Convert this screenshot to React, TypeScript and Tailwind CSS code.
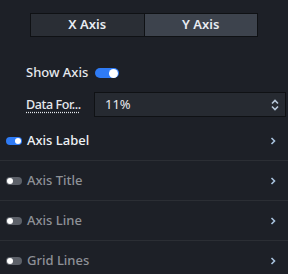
import { useState } from "react";

const Chevron = () => (
  <svg width="6" height="8" viewBox="0 0 6 8" className="shrink-0">
    <path d="M1.5 1 L4.5 4 L1.5 7" stroke="#a9c3de" strokeWidth="1.6" fill="none" />
  </svg>
);

const MiniSwitch = ({ on }: { on: boolean }) => (
  <div
    className={`w-[16px] h-[8px] rounded-full flex items-center px-[1px] ${
      on ? "bg-[#2f7bf5] justify-end" : "bg-[#5d6169] justify-start"
    }`}
  >
    <div className="w-[6px] h-[6px] rounded-full bg-white" />
  </div>
);

const sections = [
  { label: "Axis Label", on: true },
  { label: "Axis Title", on: false },
  { label: "Axis Line", on: false },
  { label: "Grid Lines", on: false },
];

export default function App() {
  const [tab, setTab] = useState("y");

  return (
    <div
      className="w-[288px] h-[274px] bg-[#1d2027] overflow-hidden text-[13px]"
      style={{ fontFamily: "'Noto Sans', 'Liberation Sans', sans-serif" }}
    >
      {/* tabs */}
      <div className="pt-[13px] px-[30px]">
        <div className="flex h-[24px] border border-[#0f1114] bg-[#0f1114] gap-[1px]">
          <button
            onClick={() => setTab("x")}
            className={`flex-1 flex items-center justify-center font-semibold text-[#e8ecf2] ${
              tab === "x" ? "bg-[#3d434d]" : "bg-[#2a2e35]"
            }`}
          >
            X Axis
          </button>
          <button
            onClick={() => setTab("y")}
            className={`flex-1 flex items-center justify-center font-semibold text-[#e8ecf2] ${
              tab === "y" ? "bg-[#3d434d]" : "bg-[#2a2e35]"
            }`}
          >
            Y Axis
          </button>
        </div>
      </div>

      {/* show axis */}
      <div className="flex items-center h-[20px] mt-[26px] pl-[26px]">
        <span className="w-[69px] text-[#e6e9ee] font-medium">Show Axis</span>
        <div className="w-[24px] h-[10px] rounded-full bg-[#2f7bf5] flex items-center justify-end pr-[1px]">
          <div className="w-[9px] h-[9px] rounded-full bg-white" />
        </div>
      </div>

      {/* data format */}
      <div className="flex items-center mt-[9px] pl-[26px] pr-[2px]">
        <div className="w-[68px] shrink-0">
          <span className="whitespace-nowrap text-[12.5px] text-[#e6e9ee] font-medium underline decoration-dotted underline-offset-[3px] tracking-[-0.4px]">
            Data For...
          </span>
        </div>
        <div className="flex-1 h-[25px] bg-[#262a31] border border-[#0f1114] flex items-center pl-[10px] pr-[6px]">
          <span className="flex-1 text-[#e6e9ee]">11%</span>
          <svg width="8" height="12" viewBox="0 0 8 12">
            <path d="M1 4.5 L4 1.5 L7 4.5" stroke="#b8c8da" strokeWidth="1.6" fill="none" />
            <path d="M1 7.5 L4 10.5 L7 7.5" stroke="#b8c8da" strokeWidth="1.6" fill="none" />
          </svg>
        </div>
      </div>

      {/* collapse sections */}
      <div className="mt-[4px]">
        {sections.map((s, i) => (
          <div
            key={s.label}
            className={`flex items-center h-[40px] pl-[6px] pr-[12px] ${
              i < sections.length - 1 ? "border-b border-[#2b2e34]" : ""
            }`}
          >
            <MiniSwitch on={s.on} />
            <span
              className={`ml-[5px] flex-1 font-medium ${
                s.on ? "text-[#eef1f5]" : "text-[#8e9197]"
              }`}
            >
              {s.label}
            </span>
            <Chevron />
          </div>
        ))}
      </div>
    </div>
  );
}
